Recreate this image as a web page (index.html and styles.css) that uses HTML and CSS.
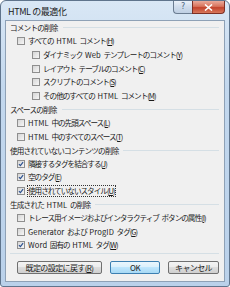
FILE: index.html
```html
<!DOCTYPE html>
<html lang="ja">
<head>
    <meta charset="UTF-8">
    <title>HTML の最適化</title>
    <link rel="stylesheet" href="styles.css">
</head>
<body>
    <div class="window">
        <div class="titlebar">
            <span class="title">HTML の最適化</span>
            <div class="caption">
                <span class="cap-help">?</span>
                <span class="cap-close">
                    <svg width="9" height="7" viewBox="0 0 9 7"><path d="M1 0.5 L8 6.5 M8 0.5 L1 6.5" stroke="#fff" stroke-width="1.6"/></svg>
                </span>
            </div>
        </div>
        <div class="panel">
            <div class="group"><span>コメントの削除</span><i class="rule"></i></div>
            <label class="opt"><span class="box"></span><span class="text">すべての<span class="en"> HTML </span>コメント(<u>H</u>)</span></label>
            <label class="opt sub"><span class="box"></span><span class="text">ダイナミック<span class="en"> Web </span>テンプレートのコメント(<u>Y</u>)</span></label>
            <label class="opt sub"><span class="box"></span><span class="text">レイアウト<span class="en"> </span>テーブルのコメント(<u>C</u>)</span></label>
            <label class="opt sub"><span class="box"></span><span class="text">スクリプトのコメント(<u>S</u>)</span></label>
            <label class="opt sub"><span class="box"></span><span class="text">その他のすべての<span class="en"> HTML </span>コメント(<u>M</u>)</span></label>

            <div class="group"><span>スペースの削除</span><i class="rule"></i></div>
            <label class="opt"><span class="box"></span><span class="text"><span class="en">HTML </span>中の先頭スペース(<u>L</u>)</span></label>
            <label class="opt"><span class="box"></span><span class="text"><span class="en">HTML </span>中のすべてのスペース(<u>T</u>)</span></label>

            <div class="group"><span>使用されていないコンテンツの削除</span><i class="rule"></i></div>
            <label class="opt"><span class="box checked"><svg viewBox="0 0 8 8"><path d="M1.2 4.2 L3.2 6.2 L6.8 1.4" stroke="#2a4f8f" stroke-width="1.5" fill="none"/></svg></span><span class="text">隣接するタグを結合する(<u>J</u>)</span></label>
            <label class="opt"><span class="box checked"><svg viewBox="0 0 8 8"><path d="M1.2 4.2 L3.2 6.2 L6.8 1.4" stroke="#2a4f8f" stroke-width="1.5" fill="none"/></svg></span><span class="text">空のタグ(<u>E</u>)</span></label>
            <label class="opt"><span class="box checked"><svg viewBox="0 0 8 8"><path d="M1.2 4.2 L3.2 6.2 L6.8 1.4" stroke="#2a4f8f" stroke-width="1.5" fill="none"/></svg></span><span class="text focus">使用されていないスタイル(<u>U</u>)</span></label>

            <div class="group"><span>生成された<span class="en"> HTML </span>の削除</span><i class="rule"></i></div>
            <label class="opt"><span class="box"></span><span class="text">トレース用イメージおよびインタラクティブ<span class="en"> </span>ボタンの属性(<u>I</u>)</span></label>
            <label class="opt"><span class="box"></span><span class="text"><span class="en">Generator </span>および<span class="en"> ProgID </span>タグ(<u>G</u>)</span></label>
            <label class="opt"><span class="box checked"><svg viewBox="0 0 8 8"><path d="M1.2 4.2 L3.2 6.2 L6.8 1.4" stroke="#2a4f8f" stroke-width="1.5" fill="none"/></svg></span><span class="text"><span class="en">Word </span>固有の<span class="en"> HTML </span>タグ(<u>W</u>)</span></label>

            <div class="sep"></div>
            <div class="buttons">
                <span class="btn reset">既定の設定に戻す(<u>R</u>)</span>
                <span class="btn ok">OK</span>
                <span class="btn cancel">キャンセル</span>
            </div>
        </div>
    </div>
</body>
</html>
```

FILE: styles.css
```css
* {
    box-sizing: border-box;
}
body {
    margin: 0;
    background-color: #ffffff;
    font-family: "Noto Sans CJK JP", "Noto Sans", sans-serif;
    color: #1a1a1a;
}
.window {
    width: 230px;
    height: 287px;
    display: flex;
    flex-direction: column;
    padding: 0 4px 4px 4px;
    border: 1px solid #5f748c;
    border-radius: 6px 6px 3px 3px;
    background: linear-gradient(to bottom, #d9e7f5, #c3d8ee 30%, #bad1ea);
}
.titlebar {
    height: 19px;
    display: flex;
    align-items: flex-start;
    flex: none;
}
.title {
    font-size: 9px;
    line-height: 10px;
    padding: 6px 0 0 3px;
    letter-spacing: -0.4px;
}
.caption {
    margin-left: auto;
    display: flex;
}
.cap-help {
    width: 19px;
    height: 13px;
    border: 1px solid #6b7c91;
    border-top: none;
    border-right: none;
    border-radius: 0 0 0 4px;
    background: linear-gradient(to bottom, #eaf1f9, #cfdcec 50%, #bfcfe3);
    font-family: "DejaVu Sans", sans-serif;
    font-size: 8px;
    line-height: 12px;
    text-align: center;
    color: #4d627d;
}
.cap-close {
    width: 33px;
    height: 13px;
    display: flex;
    align-items: center;
    justify-content: center;
    border: 1px solid #7d3025;
    border-top: none;
    border-radius: 0 0 4px 0;
    background: linear-gradient(to bottom, #eaaa9b, #d8735c 45%, #c3432c 55%, #d7785d);
}
.panel {
    flex: 1;
    display: flex;
    flex-direction: column;
    background-color: #f0f0f0;
    border: 1px solid #8ea1b6;
    font-size: 7.6px;
}
.group {
    display: flex;
    align-items: center;
    height: 13.6px;
    padding: 0 5px 0 4px;
    letter-spacing: -0.8px;
    white-space: nowrap;
}
.group .rule {
    flex: 1;
    height: 1px;
    margin-left: 5px;
    background-color: #d5dfe5;
}
.opt {
    display: flex;
    align-items: center;
    height: 13.6px;
    padding-left: 11px;
}
.opt.sub {
    padding-left: 26px;
}
.box {
    flex: none;
    width: 8px;
    height: 8px;
    margin-right: 3px;
    border: 1px solid #8f8f8f;
    background: linear-gradient(135deg, #d6d6d6, #f6f6f6);
}
.box svg {
    display: block;
    width: 6px;
    height: 6px;
}
.text {
    white-space: nowrap;
    line-height: 10px;
    letter-spacing: -1px;
}
.en {
    letter-spacing: 0.1px;
    word-spacing: 0.8px;
}
.text.focus {
    outline: 1px dotted #333;
    outline-offset: 0;
}
.sep {
    height: 1px;
    margin: 1px 5px 0 4px;
    background-color: #d5dfe5;
}
.buttons {
    display: flex;
    gap: 8px;
    padding-left: 11px;
    margin-top: 7px;
}
.btn {
    height: 13px;
    display: flex;
    align-items: center;
    justify-content: center;
    border: 1px solid #707070;
    border-radius: 2px;
    background: linear-gradient(to bottom, #f3f3f3, #ebebeb 50%, #dddddd 50%, #cfcfcf);
    font-size: 8px;
    letter-spacing: -0.6px;
}
.btn.reset {
    width: 85px;
}
.btn.ok {
    width: 50px;
    border-color: #3c7fb1;
    background: linear-gradient(to bottom, #eaf6fd, #d9f0fc 50%, #bee6fd 50%, #a7d9f5);
}
.btn.cancel {
    width: 51px;
}
```
